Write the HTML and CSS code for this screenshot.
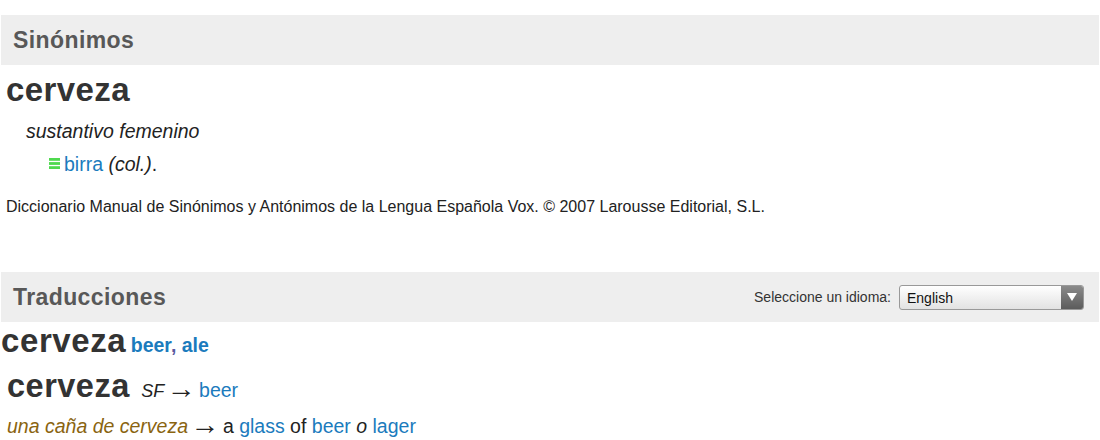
FILE: index.html
```html
<!DOCTYPE html>
<html lang="es">
<head>
<meta charset="utf-8">
<title>cerveza</title>
<link rel="stylesheet" href="styles.css">
</head>
<body>
<section class="block">
  <div class="bar"><h2 class="bar-title">Sinónimos</h2></div>
  <div class="syn">
    <h1 class="entry">cerveza</h1>
    <p class="pos">sustantivo femenino</p>
    <p class="syn-line"><svg class="eq" width="11" height="11" viewBox="0 0 11 11"><rect x="0" y="0" width="11" height="2.8" fill="#4fd94f"/><rect x="0" y="4.1" width="11" height="2.8" fill="#4fd94f"/><rect x="0" y="8.2" width="11" height="2.8" fill="#4fd94f"/></svg><a class="link">birra</a> <i>(col.)</i>.</p>
    <p class="source">Diccionario Manual de Sinónimos y Antónimos de la Lengua Española Vox. © 2007 Larousse Editorial, S.L.</p>
  </div>
</section>
<section class="block block-tr">
  <div class="bar">
    <h2 class="bar-title">Traducciones</h2>
    <div class="lang">
      <span class="lang-label">Seleccione un idioma:</span>
      <div class="select"><span class="select-val">English</span><span class="select-btn"><svg width="10" height="8" viewBox="0 0 10 8"><path d="M0 0 H10 L5 8 Z" fill="#fff"/></svg></span></div>
    </div>
  </div>
  <div class="tr">
    <p class="tr-head"><span class="entry-big">cerveza</span> <span class="tr-words">beer<span class="comma">,</span> ale</span></p>
    <p class="tr-main"><span class="entry-mid">cerveza</span> <i class="gram">SF</i> <span class="arr">→</span> <a class="link">beer</a></p>
    <p class="tr-ex"><i class="ex">una caña de cerveza</i> <span class="arr">→</span> a <a class="link">glass</a> of <a class="link">beer</a> <i>o</i> <a class="link">lager</a></p>
  </div>
</section>
</body>
</html>
```
FILE: styles.css
```css
html, body { margin: 0; padding: 0; background: #fff; }
body { font-family: "Liberation Sans", Arial, sans-serif; color: #222; width: 1100px; }
p, h1, h2 { margin: 0; }
.block { padding: 15px 1px 0; }
.block-tr { padding-top: 56px; }
.bar { height: 50px; background: #eeeeee; display: flex; align-items: center; justify-content: space-between; padding: 0 15px 0 12px; }
.bar-title { font-size: 23px; font-weight: bold; color: #585858; letter-spacing: 0.4px; }
.syn { padding-left: 5px; }
.entry { font-size: 33px; font-weight: bold; color: #333; line-height: 36px; margin-top: 7px; letter-spacing: 0.4px; }
.pos { font-style: italic; font-size: 19.5px; line-height: 22px; margin: 12px 0 0 20px; }
.syn-line { font-size: 19.5px; line-height: 22px; margin: 11px 0 0 43px; }
.eq { margin-right: 4px; vertical-align: 2px; }
.link { color: #1b7bbd; }
.source { font-size: 16px; line-height: 18px; margin-top: 23px; }
.lang { display: flex; align-items: center; gap: 8px; }
.lang-label { font-size: 14px; color: #333; }
.select { width: 183px; height: 23px; border: 1px solid #999; border-radius: 3px; display: flex; background: linear-gradient(#fff, #e2e2e2); overflow: hidden; }
.select-val { flex: 1; font-size: 14px; line-height: 25px; padding-left: 7px; color: #111; }
.select-btn { width: 22px; background: linear-gradient(#8a8a8a, #5c5c5c); display: flex; align-items: center; justify-content: center; }
.tr-head { line-height: 38px; }
.entry-big { font-size: 33px; font-weight: bold; color: #333; letter-spacing: 0.6px; }
.tr-words { font-size: 19.5px; font-weight: bold; color: #1b7bbd; }
.comma { color: #5a5aa0; }
.tr-main { margin: 4px 0 0 6px; font-size: 19.5px; line-height: 36px; }
.entry-mid { font-size: 32.5px; line-height: 1; font-weight: bold; color: #333; letter-spacing: 0.5px; }
.gram { font-size: 18px; margin-left: 6px; }
.arr { font-size: 29px; line-height: 1; vertical-align: -1px; margin: 0 -2px 0 -3px; }
.tr-ex { margin: 1px 0 0 6px; font-size: 19.5px; line-height: 28px; }
.ex { color: #8a6410; }
```
